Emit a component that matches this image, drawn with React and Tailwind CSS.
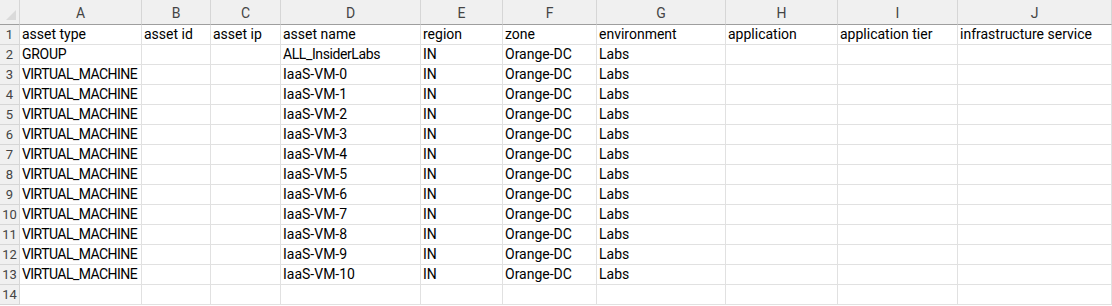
import React from "react";

const cols = ["A", "B", "C", "D", "E", "F", "G", "H", "I", "J"];
const header = ["asset type", "asset id", "asset ip", "asset name", "region", "zone", "environment", "application", "application tier", "infrastructure service"];
const rows = [header, ["GROUP", "", "", "ALL_InsiderLabs", "IN", "Orange-DC", "Labs", "", "", ""]];
for (let i = 0; i <= 10; i++) rows.push(["VIRTUAL_MACHINE", "", "", `IaaS-VM-${i}`, "IN", "Orange-DC", "Labs", "", "", ""]);
rows.push(["", "", "", "", "", "", "", "", "", ""]);

function trackFor(v) {
  if (v === "VIRTUAL_MACHINE") return "tracking-[-0.55px]";
  if (v === "ALL_InsiderLabs") return "tracking-[-0.4px]";
  if (v === "GROUP") return "tracking-[-0.3px]";
  return "";
}

export default function App() {
  return (
    <div className="w-[1112px] h-[306px] bg-white overflow-hidden" style={{ fontFamily: "Roboto, 'Liberation Sans', sans-serif" }}>
      <div className="grid grid-cols-[20px_122px_69px_70px_140px_82px_94px_129px_112px_120px_154px] auto-rows-[20px] grid-rows-[25px]">
        <div className="bg-[#f0f0f0] border-r border-b border-r-[#d6d6d6] border-b-[#9e9e9e] relative">
          <svg className="absolute left-[5px] top-[9px]" width="12" height="12" viewBox="0 0 12 12">
            <polygon points="11,1 11,11 1,11" fill="#dadada" />
          </svg>
        </div>
        {cols.map((c) => (
          <div key={c} className="bg-[#f0f0f0] border-r border-b border-r-[#d6d6d6] border-b-[#9e9e9e] flex items-center justify-center text-[14px] text-[#444] pt-[2px]">
            {c}
          </div>
        ))}
        {rows.map((r, ri) => (
          <React.Fragment key={ri}>
            <div className="bg-[#f0f0f0] border-r border-b border-[#d6d6d6] flex items-center justify-center text-[13px] text-[#444]">
              {ri + 1}
            </div>
            {r.map((v, ci) => (
              <div key={ci} className={`border-r border-b border-[#e1e1e1] flex items-center pl-[2px] text-[14px] text-black whitespace-nowrap overflow-hidden ${trackFor(v)}`}>
                {v}
              </div>
            ))}
          </React.Fragment>
        ))}
      </div>
    </div>
  );
}
